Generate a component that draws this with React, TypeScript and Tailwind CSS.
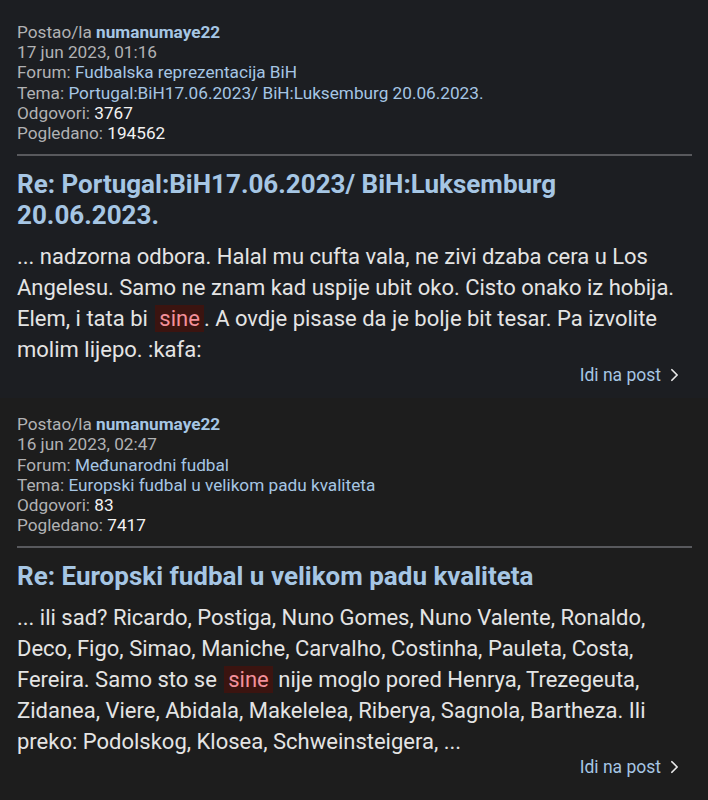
import * as React from "react"

type Post = {
  author: string
  date: string
  forum: string
  topic: string
  replies: string
  views: string
  title: string
  before: string
  after: string
}

const posts: Post[] = [
  {
    author: "numanumaye22",
    date: "17 jun 2023, 01:16",
    forum: "Fudbalska reprezentacija BiH",
    topic: "Portugal:BiH17.06.2023/ BiH:Luksemburg 20.06.2023.",
    replies: "3767",
    views: "194562",
    title: "Re: Portugal:BiH17.06.2023/ BiH:Luksemburg 20.06.2023.",
    before:
      "... nadzorna odbora. Halal mu cufta vala, ne zivi dzaba cera u Los Angelesu. Samo ne znam kad uspije ubit oko. Cisto onako iz hobija. Elem, i tata bi ",
    after: ". A ovdje pisase da je bolje bit tesar. Pa izvolite molim lijepo. :kafa:"
  },
  {
    author: "numanumaye22",
    date: "16 jun 2023, 02:47",
    forum: "Međunarodni fudbal",
    topic: "Europski fudbal u velikom padu kvaliteta",
    replies: "83",
    views: "7417",
    title: "Re: Europski fudbal u velikom padu kvaliteta",
    before:
      "... ili sad? Ricardo, Postiga, Nuno Gomes, Nuno Valente, Ronaldo, Deco, Figo, Simao, Maniche, Carvalho, Costinha, Pauleta, Costa, Fereira. Samo sto se ",
    after:
      " nije moglo pored Henrya, Trezegeuta, Zidanea, Viere, Abidala, Makelelea, Riberya, Sagnola, Bartheza. Ili preko: Podolskog, Klosea, Schweinsteigera, ..."
  }
]

function PostCard({ post, tone, top }: { post: Post; tone: string; top: string }) {
  return (
    <div className={`${tone} ${top} pl-[17px] pr-4 pb-[13px]`}>
      <div className="text-[17.2px] leading-[20.2px] text-[#b1b2b4]">
        <div>
          Postao/la <span className="font-bold text-[#a6c6e4]">{post.author}</span>
        </div>
        <div>{post.date}</div>
        <div>
          Forum: <span className="text-[#a6c6e4]">{post.forum}</span>
        </div>
        <div>
          Tema: <span className="text-[#a6c6e4]">{post.topic}</span>
        </div>
        <div>
          Odgovori: <span className="text-[#f2f2f2]">{post.replies}</span>
        </div>
        <div>
          Pogledano: <span className="text-[#f2f2f2]">{post.views}</span>
        </div>
      </div>

      <div className="mt-[11px] h-[2px] bg-[#58595d]" />

      <h2 className="mt-[13px] text-[26px] font-bold leading-[31px] text-[#a6c6e4]">
        {post.title}
      </h2>

      <p className="mt-[10px] text-[22px] leading-[31px] text-[#e4e4e4]">
        {post.before}
        <span className="ml-[2px] bg-[#3b1410] px-[4px] py-[1px] text-[#f3909a]">sine</span>
        {post.after}
      </p>

      <div className="flex items-center justify-end gap-[9px] pr-[13px] text-[17.5px] leading-[20px] text-[#a6c6e4]">
        <span>Idi na post</span>
        <svg viewBox="0 0 10 16" className="h-[14px] w-[9px]" aria-hidden="true">
          <path d="M2 2 8 8 2 14" stroke="#e8e8e8" strokeWidth="2" fill="none" strokeLinecap="round" strokeLinejoin="round" />
        </svg>
      </div>
    </div>
  )
}

export default function App() {
  return (
    <div className="min-h-[800px] w-[708px] bg-[#1d1d1d] font-['Roboto',sans-serif]">
      <PostCard post={posts[0]} tone="bg-[#1c1e22]" top="pt-[22px]" />
      <PostCard post={posts[1]} tone="bg-[#1d1d1d]" top="pt-[16px]" />
    </div>
  )
}
